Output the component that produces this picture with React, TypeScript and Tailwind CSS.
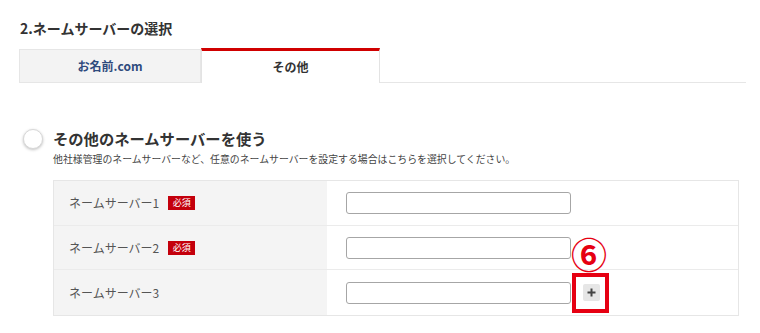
import React from "react";

const font = { fontFamily: '"Noto Sans CJK JP", "Noto Sans", sans-serif' };

function Badge() {
  return (
    <span className="ml-[9px] inline-flex h-[14px] w-[27px] items-center justify-center bg-[#c4000c] text-[9px] leading-none text-white">
      必須
    </span>
  );
}

function Row({ label, required, last, plus }: { label: string; required?: boolean; last?: boolean; plus?: boolean }) {
  return (
    <div className={`flex h-[44.7px] ${last ? "" : "border-b border-[#ebebeb]"}`}>
      <div className="flex w-[273px] items-center bg-[#f4f4f4] pl-[15px] text-[12px] text-[#555]">
        <span>{label}</span>
        {required && <Badge />}
      </div>
      <div className="flex flex-1 items-center pl-[19px]">
        <div className="h-[22px] w-[225px] rounded-[3px] border border-[#a6a6a6] bg-white" />
        {plus && (
          <div className="relative ml-[12px] flex h-[17px] w-[17px] items-center justify-center rounded-[2px] bg-[#e6e6e6]">
            <svg width="9" height="9" viewBox="0 0 9 9">
              <path d="M4.5 0.5v8M0.5 4.5h8" stroke="#444" strokeWidth="2" />
            </svg>
          </div>
        )}
      </div>
    </div>
  );
}

export default function App() {
  return (
    <div className="relative h-[333px] w-[760px] overflow-hidden bg-white text-[#333]" style={font}>
      <div className="pl-[20px] pt-[18px] text-[14px] font-bold leading-[20px] text-[#333]">2.ネームサーバーの選択</div>
      <div className="ml-[19px] mt-[10px] flex w-[727px] items-end">
        <div className="flex h-[34px] w-[182px] items-center justify-center border border-[#e6e6e6] bg-[#f3f3f3] text-[12px] font-bold text-[#2e4a7d]">
          お名前.com
        </div>
        <div className="flex h-[35px] w-[179px] items-center justify-center border-x border-t-[3px] border-x-[#e3e3e3] border-t-[#d00000] bg-white text-[12px] font-bold text-[#333]">
          その他
        </div>
        <div className="h-[1px] flex-1 bg-[#e6e6e6]" />
      </div>

      <div className="ml-[23px] mt-[45px] flex items-start">
        <div className="mt-[1px] h-[20px] w-[20px] rounded-full border border-[#d8d8d8] bg-white shadow-[0_1px_3px_rgba(0,0,0,0.25)]" />
        <div className="ml-[10px]">
          <div className="text-[15.3px] font-bold leading-[20px] text-[#333]">その他のネームサーバーを使う</div>
          <div className="mt-[4px] text-[9.9px] leading-[14px] text-[#444]">
            他社様管理のネームサーバーなど、任意のネームサーバーを設定する場合はこちらを選択してください。
          </div>
        </div>
      </div>

      <div className="ml-[53px] mt-[14px] w-[686px] border border-[#e6e6e6]">
        <Row label="ネームサーバー1" required />
        <Row label="ネームサーバー2" required />
        <Row label="ネームサーバー3" last plus />
      </div>

      <div className="absolute left-[572px] top-[273px] h-[40px] w-[37px] border-[4px] border-[#e60012]" />
      <div className="absolute left-[571px] top-[233px] text-[36px] font-bold leading-[40px] text-[#e60012]">⑥</div>
    </div>
  );
}
